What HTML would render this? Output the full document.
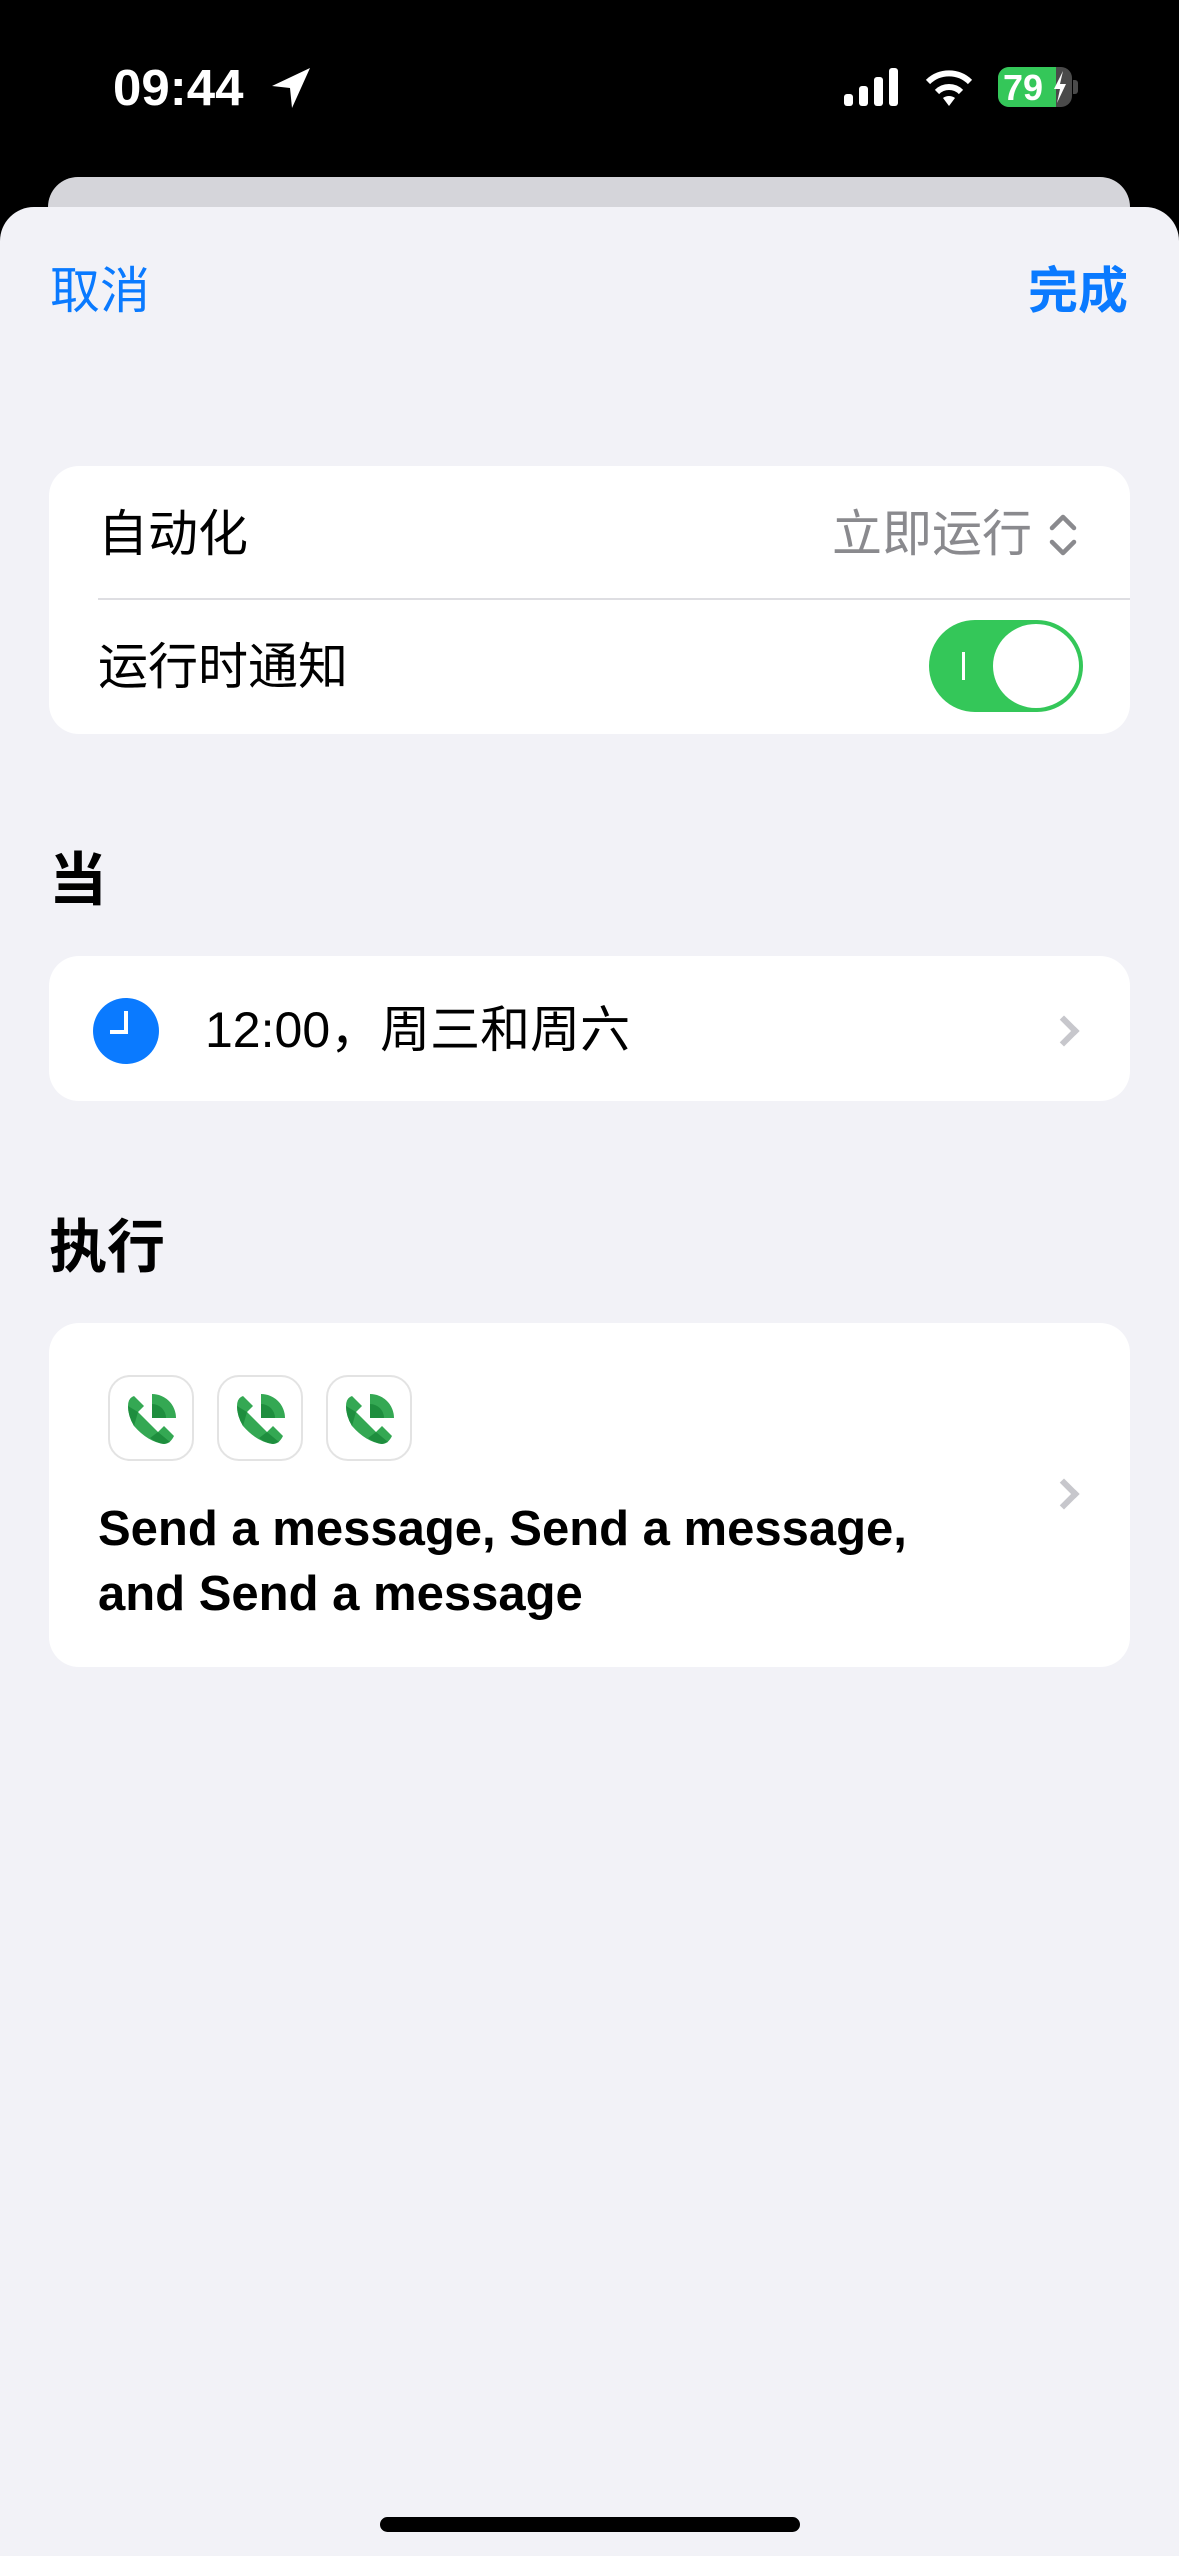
<!DOCTYPE html>
<html><head><meta charset="utf-8"><style>
*{margin:0;padding:0;box-sizing:border-box}
body{width:1179px;height:2556px;background:#000;position:relative;overflow:hidden;font-family:"Liberation Sans","Noto Sans CJK SC",sans-serif}
.abs{position:absolute}
.card{position:absolute;left:49px;width:1081px;background:#fff;border-radius:30px}
.t{position:absolute;font-size:50px;color:#000;line-height:1;white-space:nowrap}
.hdr{position:absolute;left:49px;font-size:58px;font-weight:bold;line-height:1}
.chev{position:absolute;width:22px;height:22px;border-right:6px solid #c7c7cc;border-top:6px solid #c7c7cc;transform:rotate(45deg)}
.ic{position:absolute;top:1375px;width:86px;height:86px;border:2px solid #e3e3e3;border-radius:22px;background:#fff}
</style></head><body>
<div class="t" style="left:113px;top:62px;color:#fff;font-size:51px;font-weight:bold">09:44</div>
<svg class="abs" style="left:270px;top:66px" width="42" height="44" viewBox="0 0 42 44"><path d="M40 2 L2 20 L20 22 L22 42 Z" fill="#fff"/></svg>
<svg class="abs" style="left:844px;top:68px" width="60" height="40"><rect x="0" y="26" width="9" height="12" rx="3" fill="#fff"/><rect x="15" y="18" width="9" height="20" rx="3" fill="#fff"/><rect x="30" y="9" width="9" height="29" rx="3" fill="#fff"/><rect x="45" y="0" width="9" height="38" rx="3" fill="#fff"/></svg>
<svg class="abs" style="left:923px;top:66px" width="52" height="42" viewBox="0 0 52 42"><path d="M26 40 L20 32 A10 10 0 0 1 32 32 Z" fill="#fff"/><path d="M14 26 A17 17 0 0 1 38 26" stroke="#fff" stroke-width="6" fill="none"/><path d="M5 16 A30 30 0 0 1 47 16" stroke="#fff" stroke-width="6" fill="none"/></svg>
<div class="abs" style="left:998px;top:67px;width:74px;height:40px;border-radius:11px;background:#4a4a4a;overflow:hidden"><div style="width:58px;height:40px;background:#34c759"></div></div>
<div class="t" style="left:1003px;top:70px;color:#fff;font-size:36px;font-weight:bold">79</div>
<svg class="abs" style="left:1053px;top:71px" width="14" height="32"><path d="M10 0 L1 18 H7 L4 32 L13 13 H7 Z" fill="#fff"/></svg>
<div class="abs" style="left:1073px;top:80px;width:5px;height:14px;border-radius:0 3px 3px 0;background:#4a4a4a"></div>
<div class="abs" style="left:48px;top:177px;width:1082px;height:80px;background:#d5d5da;border-radius:30px 30px 0 0"></div>
<div class="abs" style="left:0;top:207px;width:1179px;height:2349px;background:#f2f2f7;border-radius:34px 34px 0 0"></div>
<div class="t" style="left:50px;top:266px;color:#0a7aff;font-size:50px">取消</div>
<div class="t" style="left:1028px;top:266px;color:#0a7aff;font-size:50px;font-weight:bold">完成</div>
<div class="card" style="top:466px;height:268px"></div>
<div class="t" style="left:98px;top:509px">自动化</div>
<div class="t" style="left:832px;top:509px;color:#8a8a8e">立即运行</div>
<svg class="abs" style="left:1048px;top:512px" width="30" height="46"><path d="M4 16 L15 5 L26 16 M4 30 L15 41 L26 30" stroke="#8a8a8e" stroke-width="4.5" fill="none" stroke-linecap="round" stroke-linejoin="round"/></svg>
<div class="abs" style="left:98px;top:598px;width:1032px;height:2px;background:#dedee2"></div>
<div class="t" style="left:98px;top:642px">运行时通知</div>
<div class="abs" style="left:929px;top:620px;width:154px;height:92px;border-radius:46px;background:#34c759"></div>
<div class="abs" style="left:962px;top:652px;width:3px;height:28px;background:#fff"></div>
<div class="abs" style="left:993px;top:624px;width:86px;height:84px;border-radius:50%;background:#fff"></div>
<div class="hdr" style="top:852px">当</div>
<div class="card" style="top:956px;height:145px"></div>
<div class="abs" style="left:93px;top:998px;width:66px;height:66px;border-radius:50%;background:#0a7aff"></div>
<div class="abs" style="left:124px;top:1011px;width:4px;height:22px;background:#fff"></div>
<div class="abs" style="left:110px;top:1030px;width:18px;height:4px;background:#fff"></div>
<div class="t" style="left:205px;top:1005px">12:00，周三和周六</div>
<div class="chev" style="left:1053px;top:1020px"></div>
<div class="hdr" style="top:1219px">执行</div>
<div class="card" style="top:1323px;height:344px"></div>
<div class="ic" style="left:108px"></div><div class="ic" style="left:217px"></div><div class="ic" style="left:326px"></div>
<svg width="0" height="0" style="position:absolute"><defs><g id="ph"><path d="M8 20 Q8 12 14 10 L24 20 L18 26 L38 46 L44 40 L54 50 Q50 58 44 58 Q28 56 14 40 Q8 30 8 20 Z" fill="#34a853"/><path d="M8 20 Q8 30 14 40 L18 26 L8 20 Z" fill="#1e8e3e"/><path d="M44 58 Q36 57 30 52 L38 46 L50 56 Z" fill="#1e8e3e"/><path d="M32 8 A24 24 0 0 1 56 32 H32 Z" fill="#34a853"/><path d="M32 18 A14 14 0 0 1 46 32 H32 Z" fill="#1e8e3e"/></g></defs></svg>
<svg class="abs" style="left:120px;top:1386px" width="64" height="64"><use href="#ph"/></svg>
<svg class="abs" style="left:229px;top:1386px" width="64" height="64"><use href="#ph"/></svg>
<svg class="abs" style="left:338px;top:1386px" width="64" height="64"><use href="#ph"/></svg>
<div class="t" style="left:98px;top:1505px;font-weight:bold;font-size:49px">Send a message, Send a message,</div>
<div class="t" style="left:98px;top:1570px;font-weight:bold;font-size:49px">and Send a message</div>
<div class="chev" style="left:1053px;top:1483px"></div>
<div class="abs" style="left:380px;top:2517px;width:420px;height:15px;border-radius:8px;background:#000"></div>
</body></html>
